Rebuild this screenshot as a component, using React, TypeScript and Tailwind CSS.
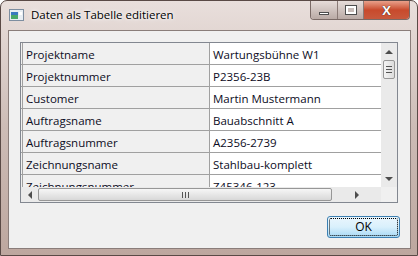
import React from 'react';

const rows: [string, string][] = [
  ['Projektname', 'Wartungsbühne W1'],
  ['Projektnummer', 'P2356-23B'],
  ['Customer', 'Martin Mustermann'],
  ['Auftragsname', 'Bauabschnitt A'],
  ['Auftragsnummer', 'A2356-2739'],
  ['Zeichnungsname', 'Stahlbau-komplett'],
  ['Zeichnungsnummer', 'Z45346-123'],
];

const font = { fontFamily: '"Open Sans", "Noto Sans", "Liberation Sans", sans-serif' };

function Arrow({ dir }: { dir: 'up' | 'down' | 'left' | 'right' }) {
  const pts = {
    up: '0,4 4,0 8,4',
    down: '0,0 8,0 4,4',
    left: '4,0 4,8 0,4',
    right: '0,0 4,4 0,8',
  }[dir];
  const vertical = dir === 'up' || dir === 'down';
  return (
    <svg width={vertical ? 8 : 4} height={vertical ? 4 : 8} viewBox={vertical ? '0 0 8 4' : '0 0 4 8'}>
      <polygon points={pts} fill="#4d4d4d" />
    </svg>
  );
}

export default function App() {
  return (
    <div
      className="w-[418px] h-[256px] flex flex-col rounded-t-[7px] border border-[#5a4a46] bg-gradient-to-b from-[#e9dfdc] via-[#cdbcb6] to-[#bda79f] overflow-hidden"
      style={font}
    >
      {/* Title bar */}
      <div className="h-[29px] flex items-start shrink-0">
        <div className="flex items-center gap-[7px] pl-[8px] pt-[8px]">
          <svg width="15" height="12" viewBox="0 0 15 12">
            <rect x="0.5" y="0.5" width="14" height="11" fill="#e8eef4" stroke="#7d8ea0" />
            <rect x="2" y="3" width="7" height="7" fill="#3a7ac0" />
            <rect x="2" y="6" width="7" height="4" fill="#4aa86a" />
            <rect x="10" y="3" width="3" height="3" fill="#ffffff" />
          </svg>
          <span className="text-[11.5px] text-black leading-none [text-shadow:0_0_6px_#ffffff,0_0_3px_#ffffff]">
            Daten als Tabelle editieren
          </span>
        </div>
        <div className="ml-auto mr-[7px] flex h-[19px] rounded-b-[4px] border border-t-0 border-[#7a6a66] overflow-hidden">
          <div className="w-[27px] flex items-center justify-center bg-gradient-to-b from-[#e6dcd9] to-[#b9aaa5] border-r border-[#8a7a76]">
            <div className="w-[10px] h-[3px] mt-[6px] bg-white border border-[#4d4d4d]" />
          </div>
          <div className="w-[26px] flex items-center justify-center bg-gradient-to-b from-[#e6dcd9] to-[#b9aaa5] border-r border-[#8a7a76]">
            <div className="w-[10px] h-[8px] border-2 border-white outline outline-1 outline-[#4d4d4d] bg-[#c8bcb8]" />
          </div>
          <div className="w-[45px] flex items-center justify-center bg-gradient-to-b from-[#e8a08a] via-[#c84a2c] to-[#c8583c]">
            <span className="text-white font-bold text-[13px] leading-none [text-shadow:0_0_1px_#000]">X</span>
          </div>
        </div>
      </div>

      {/* Client area */}
      <div className="ml-[7px] w-[403px] h-[219px] border border-[#8a7d7a] bg-[#f0f0f0] flex flex-col">
        {/* Data grid */}
        <div className="mt-[11px] ml-[11px] w-[378px] h-[161px] border border-[#828790] bg-[#f0f0f0] flex flex-col">
          <div className="flex h-[144px]">
            <div className="w-[360px] overflow-hidden">
              {rows.map(([k, v]) => (
                <div key={k} className="flex h-[22px] shrink-0 border-b border-[#a0a0a0]">
                  <div className="w-[188px] ml-[1px] border-l border-r border-[#a0a0a0] bg-[#f0f0f0] pl-[3px] pt-[2px] flex items-center text-[11.5px] text-[#0c0c24]">
                    {k}
                  </div>
                  <div className="flex-1 bg-white pl-[3px] pt-[2px] flex items-center text-[11.5px] text-[#0c0c24]">{v}</div>
                </div>
              ))}
            </div>
            {/* Vertical scrollbar */}
            <div className="w-[16px] bg-[#eaeaea] flex flex-col items-center">
              <div className="h-[17px] flex items-center justify-center">
                <Arrow dir="up" />
              </div>
              <div className="w-[12px] h-[19px] rounded-[2px] border border-[#979797] bg-gradient-to-r from-[#f4f4f4] to-[#dcdcdc] flex flex-col items-center justify-center gap-[2px]">
                <div className="w-[6px] h-[1px] bg-[#555]" />
                <div className="w-[6px] h-[1px] bg-[#555]" />
                <div className="w-[6px] h-[1px] bg-[#555]" />
              </div>
              <div className="mt-auto h-[17px] flex items-center justify-center">
                <Arrow dir="down" />
              </div>
            </div>
          </div>
          {/* Horizontal scrollbar */}
          <div className="flex h-[15px]">
            <div className="w-[360px] bg-[#eaeaea] flex items-center">
              <div className="w-[17px] flex items-center justify-center">
                <Arrow dir="left" />
              </div>
              <div className="w-[294px] h-[13px] rounded-[2px] border border-[#979797] bg-gradient-to-b from-[#f6f6f6] to-[#d8d8d8] flex items-center justify-center gap-[2px]">
                <div className="w-[1px] h-[6px] bg-[#555]" />
                <div className="w-[1px] h-[6px] bg-[#555]" />
                <div className="w-[1px] h-[6px] bg-[#555]" />
              </div>
              <div className="flex-1 flex items-center justify-center">
                <Arrow dir="right" />
              </div>
            </div>
            <div className="w-[16px] bg-[#f0f0f0]" />
          </div>
        </div>

        {/* Footer */}
        <div className="flex justify-end mt-[13px] mr-[10px]">
          <button className="w-[73px] h-[22px] rounded-[3px] border border-[#3c7fb1] bg-gradient-to-b from-[#eaf6fd] via-[#d9f0fc] to-[#a7d9f5] p-[1px]">
            <div className="w-full h-full rounded-[2px] border border-dotted border-[#000] flex items-center justify-center text-[12px] text-black leading-none">
              OK
            </div>
          </button>
        </div>
      </div>
    </div>
  );
}
